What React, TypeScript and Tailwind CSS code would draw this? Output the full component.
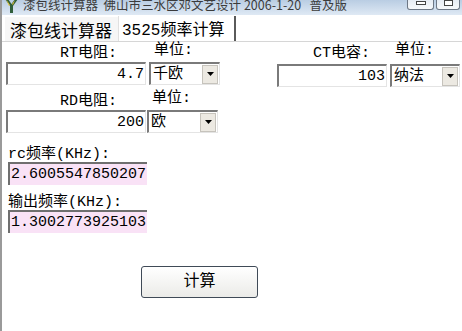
import React from "react";

const F = { fontFamily: '"Liberation Mono", "Noto Sans CJK SC", monospace' };

function Sunken({ className = "", children }: { className?: string; children?: React.ReactNode }) {
  return (
    <div
      className={`border-t-2 border-l-2 border-b border-r border-t-[#7a7a7a] border-l-[#7a7a7a] border-b-[#e4e4e4] border-r-[#e4e4e4] ${className}`}
    >
      {children}
    </div>
  );
}

function Select({ label, w }: { label: string; w: string }) {
  return (
    <Sunken className={`${w} h-[23px] bg-white flex items-center`}>
      <div className="flex-1 pl-[2px] text-[15px] leading-none text-black">{label}</div>
      <div className="w-[16px] h-[19px] mr-[1px] bg-[#ece9e2] border border-[#c6c3bc] flex items-center justify-center">
        <svg width="7" height="4" viewBox="0 0 7 4">
          <path d="M0 0h7L3.5 4z" fill="#000" />
        </svg>
      </div>
    </Sunken>
  );
}

function Input({ value, w }: { value: string; w: string }) {
  return (
    <Sunken className={`${w} h-[23px] bg-white flex items-center justify-end pr-[1px]`}>
      <span className="text-[15px] leading-none text-black">{value}</span>
    </Sunken>
  );
}

export default function App() {
  return (
    <div className="w-[462px] h-[331px] overflow-hidden bg-white relative border-l-2 border-l-[#9a9a9a]" style={F}>
      {/* title bar */}
      <div className="h-[15px] bg-gradient-to-b from-[#b9cde3] to-[#dfe9f4] flex items-start relative overflow-hidden">
        <div className="w-[16px] h-[14px] ml-[1px] -mt-[2px]">
          <svg width="16" height="16" viewBox="0 0 16 16">
            <path d="M2 1 L7 8 L7 15 L10 15 L10 8 L15 1 L12 1 L8.5 6 L5 1 Z" fill="#2f5e3a" />
            <path d="M3 1 L7 7 L6 8 Z" fill="#e6c43a" />
            <path d="M12 2 L9 6 L10 7 Z" fill="#e6c43a" />
          </svg>
        </div>
        <div className="ml-[4px] -mt-[1px] text-[12.5px] leading-none text-[#3b3b3b] whitespace-pre" style={{ fontFamily: '"Noto Sans CJK SC", sans-serif' }}>
          漆包线计算器  佛山市三水区邓文艺设计 2006-1-20   普及版
        </div>
        <div className="absolute right-[2px] top-0 flex gap-[2px]">
          <div className="w-[27px] h-[10px] border border-t-0 border-[#6d7785] rounded-b-[3px] bg-gradient-to-b from-[#e6ecf3] to-[#f7f9fb] flex justify-center">
            <div className="w-[10px] h-[4px] border border-[#444] mt-[1px] bg-white" />
          </div>
          <div className="w-[24px] h-[10px] border border-t-0 border-[#6d7785] rounded-b-[3px] bg-gradient-to-b from-[#e6ecf3] to-[#f7f9fb] flex justify-center">
            <div className="w-[9px] h-[6px] border border-[#444] mt-[0px] bg-white" />
          </div>
        </div>
      </div>

      {/* tabs */}
      <div className="h-[27px] border-b border-[#d6d6d6] flex items-end pl-[2px]">
        <div className="h-[25px] w-[114px] bg-[#f6f6f6] border-t border-l border-[#ffffff] flex items-start pl-[5px] pt-[7px] text-[17px] leading-none text-black">
          漆包线计算器
        </div>
        <div className="h-[25px] w-[118px] bg-white border-r-2 border-r-[#5a5a5a] border-l border-l-[#e0e0e0] flex items-start pl-[3px] pt-[7px] text-[16px] leading-none text-black">
          3525频率计算
        </div>
      </div>

      {/* content */}
      <div className="flex pl-[4px]">
        {/* left column */}
        <div className="flex flex-col w-[220px]">
          <div className="flex h-[20px] text-[15px] leading-none text-black">
            <span className="ml-[54px] mt-[4px]">RT电阻:</span>
            <span className="ml-[37px] mt-[1px]">单位:</span>
          </div>
          <div className="flex gap-[3px]">
            <Input value="4.7" w="w-[140px]" />
            <Select label="千欧" w="w-[71px]" />
          </div>
          <div className="flex h-[25px] text-[15px] leading-none text-black">
            <span className="ml-[54px] mt-[9px]">RD电阻:</span>
            <span className="ml-[35px] mt-[6px]">单位:</span>
          </div>
          <div className="flex gap-[1px]">
            <Input value="200" w="w-[140px]" />
            <Select label="欧" w="w-[71px]" />
          </div>
          <div className="ml-[2px] mt-[14px] text-[15px] leading-none text-black">rc频率(KHz):</div>
          <div className="ml-[2px] mt-[0px] w-[139px] h-[23px] bg-[#f9e2f6] border-t-2 border-l-2 border-[#6f6f6f] flex items-center pl-[1px] text-[15px] leading-none text-black">
            2.6005547850207
          </div>
          <div className="ml-[2px] mt-[10px] text-[15px] leading-none text-black">输出频率(KHz):</div>
          <div className="ml-[2px] mt-[0px] w-[139px] h-[23px] bg-[#f9e2f6] border-t-2 border-l-2 border-[#6f6f6f] flex items-center pl-[1px] text-[15px] leading-none text-black">
            1.3002773925103
          </div>
          <div className="ml-[135px] mt-[33px] w-[117px] h-[32px] rounded-[3px] border border-[#3f4a57] bg-gradient-to-b from-[#ffffff] to-[#ebebe8] flex items-center justify-center text-[16px] leading-none text-black">
            计算
          </div>
        </div>
        {/* right column */}
        <div className="flex flex-col ml-[51px]">
          <div className="flex h-[22px] text-[15px] leading-none text-black">
            <span className="ml-[36px] mt-[4px]">CT电容:</span>
            <span className="ml-[25px] mt-[1px]">单位:</span>
          </div>
          <div className="flex gap-[3px]">
            <Input value="103" w="w-[110px]" />
            <Select label="纳法" w="w-[70px]" />
          </div>
        </div>
      </div>
    </div>
  );
}
